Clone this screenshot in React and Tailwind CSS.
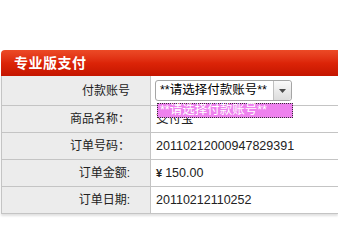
import React from 'react';

const rows = [
  { label: "商品名称：", value: "支付宝" },
  { label: "订单号码：", value: "20110212000947829391" },
  { label: "订单金额:", value: "¥ 150.00", money: true },
  { label: "订单日期:", value: "20110212110252" },
];

const font = { fontFamily: '"Liberation Sans", Arial, "Noto Sans CJK SC", sans-serif' };

export default function App() {
  return (
    <div className="w-[338px] h-[251px] bg-white overflow-hidden pt-[50px] pl-[1px]" style={font}>
      <div className="h-[26px] rounded-tl-[4px] bg-gradient-to-b from-[#ec4a26] via-[#dc2408] to-[#c41500] text-white font-bold text-[14px] leading-[26px] pl-[13px] tracking-[0.5px]">
        专业版支付
      </div>
      <div className="relative border-l border-[#c4c4c4] shadow-[0_2px_2px_rgba(0,0,0,0.12)]">
        <div className="flex h-[30px] border-b border-[#c4c4c4]">
          <div className="w-[149px] shrink-0 bg-[#ececec] border-r border-[#c4c4c4] flex items-center justify-end pr-[20px] text-[12px] text-[#222]">
            付款账号
          </div>
          <div className="flex-1 flex items-center pl-[4px]">
            <div className="flex h-[21px] w-[137px] border border-[#a5a5a5] rounded-[3px] bg-white">
              <div className="flex-1 flex items-center pl-[4px] text-[12.5px] text-black">**请选择付款账号**</div>
              <div className="w-[18px] border-l border-[#c0c0c0] rounded-r-[3px] bg-gradient-to-b from-[#fafafa] to-[#dcdcdc] flex items-center justify-center">
                <svg width="7" height="4" viewBox="0 0 7 4"><path d="M0 0h7L3.5 4z" fill="#4a4a4a" /></svg>
              </div>
            </div>
          </div>
        </div>
        {rows.map((row, i) => (
          <div key={i} className="flex h-[27px] border-b border-[#c4c4c4]">
            <div className="w-[149px] shrink-0 bg-[#ececec] border-r border-[#c4c4c4] flex items-center justify-end pr-[20px] text-[12px] text-[#222]">
              {row.label}
            </div>
            <div className="flex-1 flex items-center pl-[5px] text-[12.5px] text-[#222]">
              {row.money ? (
                <span><span className="font-bold text-[11px] mr-[3px]">¥</span>150.00</span>
              ) : row.value}
            </div>
          </div>
        ))}
        <div className="absolute left-[155px] top-[27px] w-[136px] h-[15px] bg-[#ee82ee] border border-dotted border-[#333] text-white text-[12.5px] leading-[13px] pl-[2px]">
          **请选择付款账号**
        </div>
      </div>
    </div>
  );
}
